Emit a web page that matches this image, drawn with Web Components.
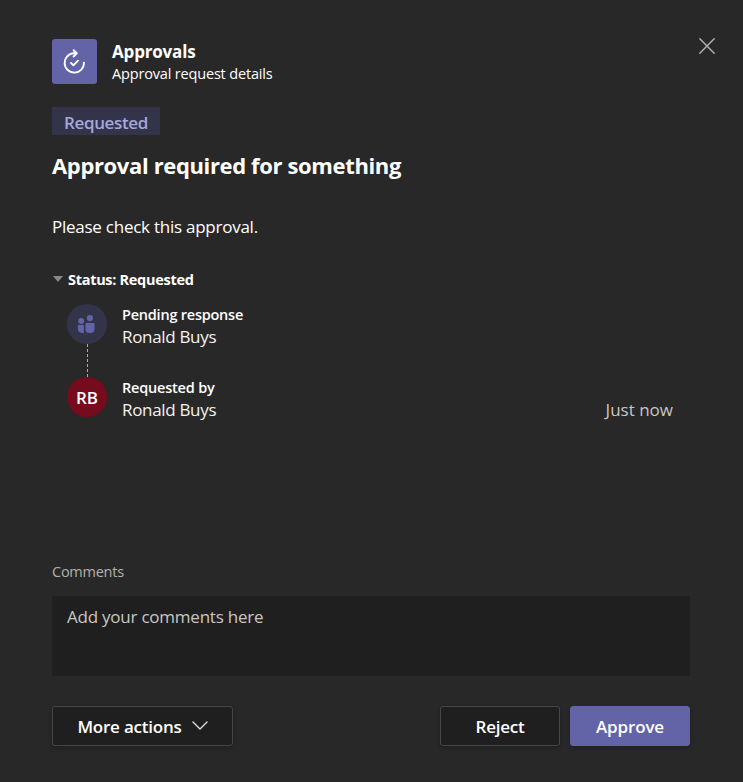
<!DOCTYPE html>
<html lang="en">
<head>
<meta charset="utf-8">
<title>Approvals</title>
<style>
html, body { margin: 0; height: 100%; background: #292828; }
</style>
</head>
<body>
<script>
const define = (name, markup) => customElements.define(name, class extends HTMLElement {
  constructor() {
    super();
    const t = document.createElement('template');
    t.innerHTML = markup;
    this.attachShadow({ mode: 'open' }).append(t.content.cloneNode(true));
  }
});

define('app-header', `
<style>
:host { display: flex; height: 45px; }
.tile { width: 45px; height: 45px; border-radius: 3px; background: #6264a7; }
.text { margin-left: 15px; padding-top: 1px; flex: 1; }
.name { font-weight: 700; line-height: 24px; letter-spacing: -.18px; }
.sub { font-size: 14.5px; line-height: 20px; letter-spacing: -.17px; }
.close { width: 18px; height: 18px; margin-right: -26px; margin-top: -2px; }
svg { display: block; }
</style>
<div class="tile"><svg width="45" height="45" fill="none" stroke="#fff" stroke-width="1.9" stroke-linecap="round" stroke-linejoin="round">
<path d="M23.6 14.2H21.9A9.7 9.7 0 1 0 32 23.6"/><path d="M21.6 11.2 24.8 14.3 21.6 17.5"/><path d="M18.9 23.9 21.4 26.3 26 21.7"/></svg></div>
<div class="text"><div class="name"><slot name="name"></slot></div><div class="sub"><slot name="sub"></slot></div></div>
<svg class="close" viewBox="0 0 18 18" fill="none" stroke="#b5b4b4" stroke-width="1.4" stroke-linecap="round"><path d="M1.8 1.8 16.2 16.2M16.2 1.8 1.8 16.2"/></svg>
`);

define('status-chip', `
<style>
:host { display: block; box-sizing: border-box; width: 108px; height: 28px; padding: 2px 0 0 12px; line-height: 28px;
 background: #33344a; color: #a6a7dc; font-weight: 600; letter-spacing: -.37px; white-space: nowrap; }
</style><slot></slot>`);

define('person-row', `
<style>
:host { display: flex; height: 40px; }
.avatar { width: 40px; height: 40px; border-radius: 50%; display: flex; align-items: center; justify-content: center;
 background: var(--avatar); font-weight: 600; }
.text { flex: 1; margin-left: 15px; }
.label { font-size: 14.5px; font-weight: 600; line-height: 21px; letter-spacing: var(--label-spacing, -.23px); }
.name { line-height: 24px; letter-spacing: -.32px; color: #f3f2f1; }
.time { padding-top: 21px; line-height: 24px; letter-spacing: 0; color: #c8c6c4; }
</style>
<div class="avatar"><slot name="avatar"></slot></div>
<div class="text"><div class="label"><slot name="label"></slot></div><div class="name"><slot name="name"></slot></div></div>
<div class="time"><slot name="time"></slot></div>`);

define('people-icon', `
<style>:host, svg { display: block; }</style>
<svg width="20" height="18" fill="#6264a7"><circle cx="4.2" cy="5.9" r="3"/><circle cx="12.9" cy="3.1" r="3.1"/>
<path d="M.9 10h5.9v7.9H5A4.1 4.1 0 0 1 .9 13.8Z"/><path d="M9.5 7.9h7a1 1 0 0 1 1 1v5.7a3.3 3.3 0 0 1-3.3 3.3h-2.4a3.3 3.3 0 0 1-3.3-3.3V8.9a1 1 0 0 1 1-1Z"/></svg>`);

define('status-timeline', `
<style>
:host { display: block; }
.head { display: flex; align-items: center; height: 20px; font-size: 14.5px; font-weight: 700; letter-spacing: -.3px; line-height: 20px; }
.head svg { margin: 0 5px 2px 1px; }
.rows { padding: 14px 17px 0 15px; }
.line { width: 1px; height: 33px; margin-left: 20px; background: repeating-linear-gradient(#aaa 0 3px, transparent 3px 5px); }
</style>
<div class="head"><svg width="10" height="6"><path d="M0 0h10L5 6Z" fill="#8a8886"/></svg><slot name="title"></slot></div>
<div class="rows"><slot name="first"></slot><div class="line"></div><slot name="second"></slot></div>`);

define('comment-box', `
<style>
:host { display: block; }
.label { font-size: 14.5px; line-height: 20px; color: #b3b0ad; letter-spacing: -.25px; }
.box { margin-top: 14px; height: 80px; box-sizing: border-box; padding: 9px 15px; background: #201f1f; color: #c8c6c4; line-height: 24px; letter-spacing: -.23px; }
</style>
<div class="label"><slot name="label"></slot></div><div class="box"><slot name="hint"></slot></div>`);

define('action-button', `
<style>
:host { display: flex; box-sizing: border-box; width: 120px; height: 40px; align-items: center; justify-content: center;
 border: 1px solid #484644; border-radius: 3px; background: #201f1f; font-weight: 600; letter-spacing: -.25px; box-shadow: 0 2px 4px rgba(0,0,0,.22); white-space: nowrap; }
:host([primary]) { background: #6264a7; border-color: #6264a7; letter-spacing: -.15px; }
:host([menu]) { width: 181px; margin-right: auto; letter-spacing: -.22px; }
svg { display: none; margin-left: 10px; }
:host([menu]) svg { display: block; }
</style>
<slot></slot><svg width="16" height="10" fill="none" stroke="#e1dfdd" stroke-width="1.4" stroke-linecap="round" stroke-linejoin="round"><path d="M1 1 8 8 15 1"/></svg>`);

define('approval-dialog', `
<style>
:host { display: flex; flex-direction: column; box-sizing: border-box; height: 782px; padding: 39px 53px 36px 52px;
 background: #292828; color: #fff; font: 17px "Open Sans", "Noto Sans", sans-serif; }
.chip { margin-top: 23px; }
.title { margin-top: 15px; font-size: 22px; font-weight: 700; line-height: 30px; letter-spacing: -.36px; }
.body { margin-top: 35px; line-height: 24px; letter-spacing: -.25px; }
.status { margin-top: 31px; }
.comments { margin-top: auto; }
.actions { display: flex; gap: 10px; margin-top: 30px; }
</style>
<slot name="header"></slot>
<div class="chip"><slot name="chip"></slot></div>
<div class="title"><slot name="title"></slot></div>
<div class="body"><slot name="body"></slot></div>
<div class="status"><slot name="status"></slot></div>
<div class="comments"><slot name="comments"></slot></div>
<div class="actions"><slot></slot></div>`);
</script>
<approval-dialog>
  <app-header slot="header"><span slot="name">Approvals</span><span slot="sub">Approval request details</span></app-header>
  <status-chip slot="chip">Requested</status-chip>
  <span slot="title">Approval required for something</span>
  <span slot="body">Please check this approval.</span>
  <status-timeline slot="status">
    <span slot="title">Status: Requested</span>
    <person-row slot="first" style="--avatar:#33344a"><people-icon slot="avatar"></people-icon><span slot="label">Pending response</span><span slot="name">Ronald Buys</span></person-row>
    <person-row slot="second" style="--avatar:#750b1c;--label-spacing:-.2px"><span slot="avatar">RB</span><span slot="label">Requested by</span><span slot="name">Ronald Buys</span><span slot="time">Just now</span></person-row>
  </status-timeline>
  <comment-box slot="comments"><span slot="label">Comments</span><span slot="hint">Add your comments here</span></comment-box>
  <action-button menu>More actions</action-button>
  <action-button>Reject</action-button>
  <action-button primary>Approve</action-button>
</approval-dialog>
</body>
</html>
